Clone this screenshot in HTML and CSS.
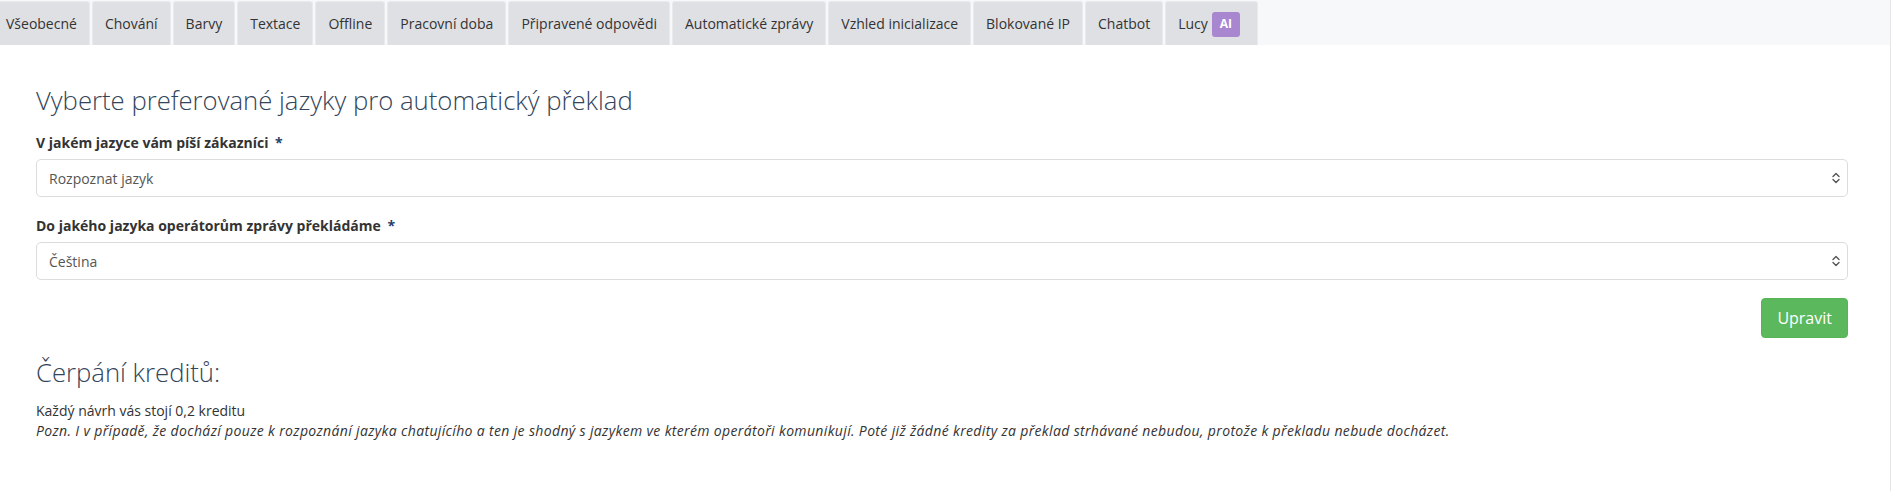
FILE: index.html
```html
<!DOCTYPE html>
<html lang="cs">
<head>
<meta charset="utf-8">
<title>Nastavení překladu</title>
<link rel="stylesheet" href="styles.css">
</head>
<body>
<div class="page">
  <nav class="tabbar">
    <ul class="tabs">
      <li class="tab">Všeobecné</li>
      <li class="tab">Chování</li>
      <li class="tab">Barvy</li>
      <li class="tab">Textace</li>
      <li class="tab">Offline</li>
      <li class="tab">Pracovní doba</li>
      <li class="tab">Připravené odpovědi</li>
      <li class="tab">Automatické zprávy</li>
      <li class="tab">Vzhled inicializace</li>
      <li class="tab">Blokované IP</li>
      <li class="tab">Chatbot</li>
      <li class="tab">Lucy <span class="badge-ai">AI</span></li>
    </ul>
  </nav>

  <main class="content">
    <h3 class="section-title">Vyberte preferované jazyky pro automatický překlad</h3>

    <div class="form-group first">
      <label class="field-label">V jakém jazyce vám píší zákazníci <span class="req">*</span></label>
      <div class="select-wrap">
        <select class="form-select">
          <option>Rozpoznat jazyk</option>
        </select>
        <svg class="select-arrows" width="8" height="12" viewBox="0 0 8 12" aria-hidden="true">
          <path d="M1 4.5 L4 1.5 L7 4.5 M1 7.5 L4 10.5 L7 7.5" fill="none" stroke="#555" stroke-width="1.4" stroke-linecap="round" stroke-linejoin="round"/>
        </svg>
      </div>
    </div>

    <div class="form-group">
      <label class="field-label">Do jakého jazyka operátorům zprávy překládáme <span class="req">*</span></label>
      <div class="select-wrap">
        <select class="form-select">
          <option>Čeština</option>
        </select>
        <svg class="select-arrows" width="8" height="12" viewBox="0 0 8 12" aria-hidden="true">
          <path d="M1 4.5 L4 1.5 L7 4.5 M1 7.5 L4 10.5 L7 7.5" fill="none" stroke="#555" stroke-width="1.4" stroke-linecap="round" stroke-linejoin="round"/>
        </svg>
      </div>
    </div>

    <div class="actions">
      <button class="btn-success" type="button">Upravit</button>
    </div>

    <h3 class="section-title credits">Čerpání kreditů:</h3>
    <p class="credit-text">Každý návrh vás stojí 0,2 kreditu<br>
      <em>Pozn. I v případě, že dochází pouze k rozpoznání jazyka chatujícího a ten je shodný s jazykem ve kterém operátoři komunikují. Poté již žádné kredity za překlad strhávané nebudou, protože k překladu nebude docházet.</em>
    </p>
  </main>
</div>
</body>
</html>
```

FILE: styles.css
```css
html, body {
  margin: 0;
  padding: 0;
  background: #ffffff;
}

body {
  font-family: "Open Sans", "Liberation Sans", sans-serif;
  font-size: 14px;
  line-height: 20px;
  color: #333333;
}

.page {
  width: 1891px;
  min-height: 491px;
  box-sizing: border-box;
  border-right: 1px solid #e6e6e8;
}

/* Tabs */
.tabbar {
  background: #f7f8fa;
  height: 45px;
  overflow: hidden;
}

.tabs {
  list-style: none;
  margin: 0 0 0 -7px;
  padding: 1px 0 0 0;
  display: flex;
  gap: 2px;
}

.tab {
  display: flex;
  align-items: center;
  height: 45px;
  padding: 0 12px;
  background: #dfe0e4;
  border: 1px solid #e9eaec;
  border-bottom: none;
  border-radius: 3px 3px 0 0;
  color: #333333;
  font-size: 14px;
  white-space: nowrap;
  box-sizing: border-box;
}

.badge-ai {
  display: inline-flex;
  align-items: center;
  justify-content: center;
  width: 28px;
  height: 25px;
  margin-left: 4px;
  margin-right: 5px;
  background: #a886d0;
  color: #ffffff;
  border-radius: 3px;
  font-size: 12px;
  font-weight: 700;
}

/* Content */
.content {
  padding: 0 42px 0 36px;
}

.section-title {
  margin: 42px 0 0 0;
  font-size: 25.7px;
  font-weight: 300;
  line-height: 27px;
  color: #33455a;
}

.form-group {
  margin-top: 19px;
}

.form-group.first {
  margin-top: 19px;
}

.field-label {
  display: block;
  font-weight: 700;
  font-size: 14px;
  line-height: 20px;
  margin-bottom: 6px;
  color: #333333;
}

.req {
  color: #2b3f68;
  margin-left: 3px;
}

.select-wrap {
  position: relative;
}

.form-select {
  display: block;
  width: 100%;
  height: 38px;
  padding: 0 12px;
  font-family: "Open Sans", "Liberation Sans", sans-serif;
  font-size: 14px;
  color: #555555;
  background: #ffffff;
  border: 1px solid #dcdcdc;
  border-radius: 5px;
  -webkit-appearance: none;
  appearance: none;
  box-sizing: border-box;
  outline: none;
}

.select-arrows {
  position: absolute;
  right: 8px;
  top: 13px;
  pointer-events: none;
}

.actions {
  display: flex;
  justify-content: flex-end;
  margin-top: 18px;
}

.btn-success {
  height: 40px;
  padding: 0 15px;
  font-family: "Open Sans", "Liberation Sans", sans-serif;
  font-size: 16px;
  color: #ffffff;
  background: #5cb85c;
  border: 1px solid #56b356;
  border-radius: 4px;
}

.section-title.credits {
  margin-top: 21px;
}

.credit-text {
  margin: 15px 0 0 0;
  font-size: 14px;
  line-height: 20px;
  color: #333333;
}

.credit-text em {
  font-style: italic;
  letter-spacing: 0.35px;
}
```
